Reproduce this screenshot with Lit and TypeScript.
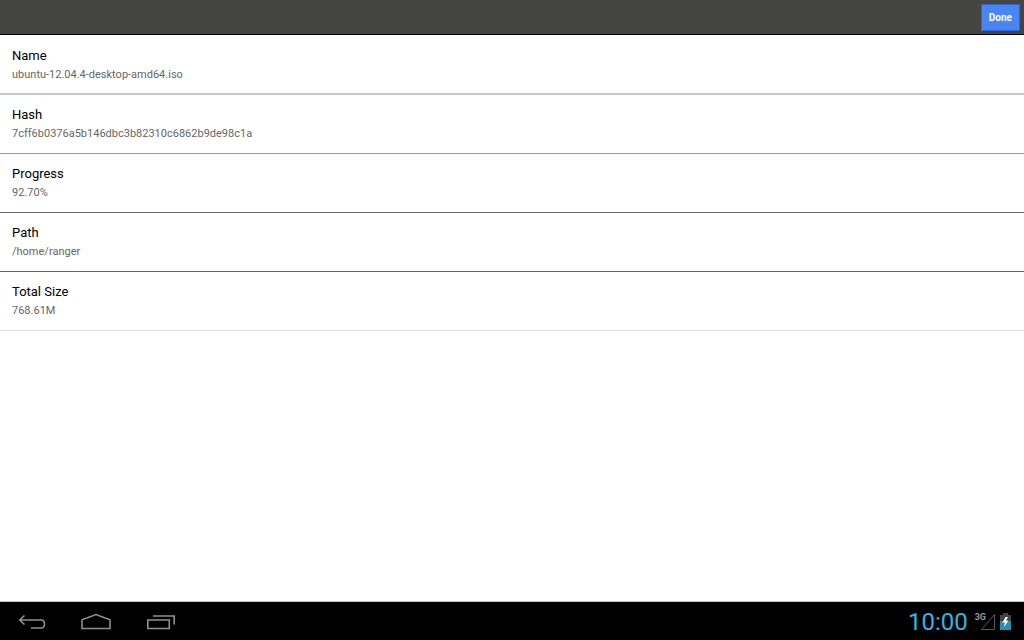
import { LitElement, html, css } from "lit";
import { customElement } from "lit/decorators.js";

const details = [
  { label: "Name", value: "ubuntu-12.04.4-desktop-amd64.iso", tone: "soft" },
  { label: "Hash", value: "7cff6b0376a5b146dbc3b82310c6862b9de98c1a", tone: "mid" },
  { label: "Progress", value: "92.70%", tone: "strong" },
  { label: "Path", value: "/home/ranger", tone: "strong" },
  { label: "Total Size", value: "768.61M", tone: "faint" },
];

@customElement("torrent-details")
class TorrentDetails extends LitElement {
  static styles = css`
    :host { display: block; }
    dl { margin: 0; padding-top: 1px; }
    .row {
      box-sizing: border-box;
      min-height: 59px;
      padding: 10px 12px 8px;
      border-bottom: 1px solid #666;
    }
    .soft { border-bottom: 2px solid #c8c8c8; }
    .mid { border-bottom-color: #999; }
    .faint { border-bottom-color: #e0e0e0; }
    dt { font-size: 13px; line-height: 19px; color: #000; }
    dd { margin: 0; font-size: 11px; line-height: 19px; color: #666; }
  `;
  render() {
    return html`<dl>
      ${details.map(
        (d) => html`<div class="row ${d.tone}"><dt>${d.label}</dt><dd>${d.value}</dd></div>`
      )}
    </dl>`;
  }
}

@customElement("system-bar")
class SystemBar extends LitElement {
  static styles = css`
    :host {
      display: flex;
      align-items: center;
      justify-content: space-between;
      box-sizing: border-box;
      height: 39px;
      padding-top: 2px;
      background: #000;
      border-top: 1px solid #c8c8c8;
    }
    nav { display: flex; padding-left: 16px; gap: 32px; }
    button { display: block; padding: 0; border: 0; background: none; }
    svg { display: block; }
    .status { display: flex; align-items: center; padding-right: 13px; }
    time { color: #33b5e5; font-size: 24px; line-height: 36px; margin-right: 7px; }
    .network { display: flex; }
    .network span {
      font-size: 9px;
      line-height: 9px;
      font-weight: 700;
      color: #999;
    }
    .signal { margin-left: -6px; }
    .battery { margin-left: 4px; }
  `;
  render() {
    return html`
      <nav>
        <button aria-label="Back">
          <svg width="32" height="20" viewBox="0 0 32 20" fill="none" stroke="#909090" stroke-width="1.6">
            <path d="M8.5 3.5 L3.7 8 L8.5 12.5 M4 8 H25 Q28.5 8 28.5 12 Q28.5 16 25 16 H15" />
          </svg>
        </button>
        <button aria-label="Home">
          <svg width="32" height="20" viewBox="0 0 32 20" fill="none" stroke="#909090" stroke-width="1.6">
            <path d="M2 16.5 V7.8 L16 2.6 L30 7.8 V16.5 Z" />
          </svg>
        </button>
        <button aria-label="Recent apps">
          <svg width="32" height="20" viewBox="0 0 32 20" fill="none" stroke="#909090" stroke-width="1.6">
            <path d="M3.8 8 H25.3 V16.5 H3.8 Z M9 4 H30.2 V12.5" />
          </svg>
        </button>
      </nav>
      <div class="status">
        <time>10:00</time>
        <div class="network">
          <span>3G</span>
          <svg class="signal" width="16" height="18" viewBox="0 0 16 18" fill="none" stroke="#5a5a5a">
            <path d="M1.5 16.5 L14.5 1.5 V16.5 Z" />
          </svg>
        </div>
        <svg class="battery" width="11" height="18" viewBox="0 0 11 18" role="img" aria-label="Battery charging">
          <path d="M3 0 H8 V2 H11 V8 H0 V2 H3 Z" fill="#444" />
          <path d="M0 8 H11 V17 H0 Z" fill="#2a8fb5" />
          <path d="M5.5 4 L2.5 9.5 H5 L4 14 L8.5 7.5 H6 L8 4 Z" fill="#fff" />
        </svg>
      </div>
    `;
  }
}

@customElement("app-root")
class AppRoot extends LitElement {
  static styles = css`
    :host {
      display: flex;
      flex-direction: column;
      min-height: 100vh;
      background: #fff;
      font-family: Roboto, sans-serif;
    }
    header {
      display: flex;
      justify-content: flex-end;
      align-items: center;
      box-sizing: border-box;
      height: 35px;
      padding: 0 4px;
      background: #444541;
      border-bottom: 1px solid #000;
    }
    .done {
      box-sizing: border-box;
      height: 27px;
      padding: 0 7px;
      border: 1px solid #2a66dc;
      background: #4a86f3;
      color: #fff;
      font: 700 10px Roboto, sans-serif;
    }
    main { flex: 1; }
  `;
  render() {
    return html`
      <header><button class="done">Done</button></header>
      <main><torrent-details></torrent-details></main>
      <system-bar></system-bar>
    `;
  }
}
